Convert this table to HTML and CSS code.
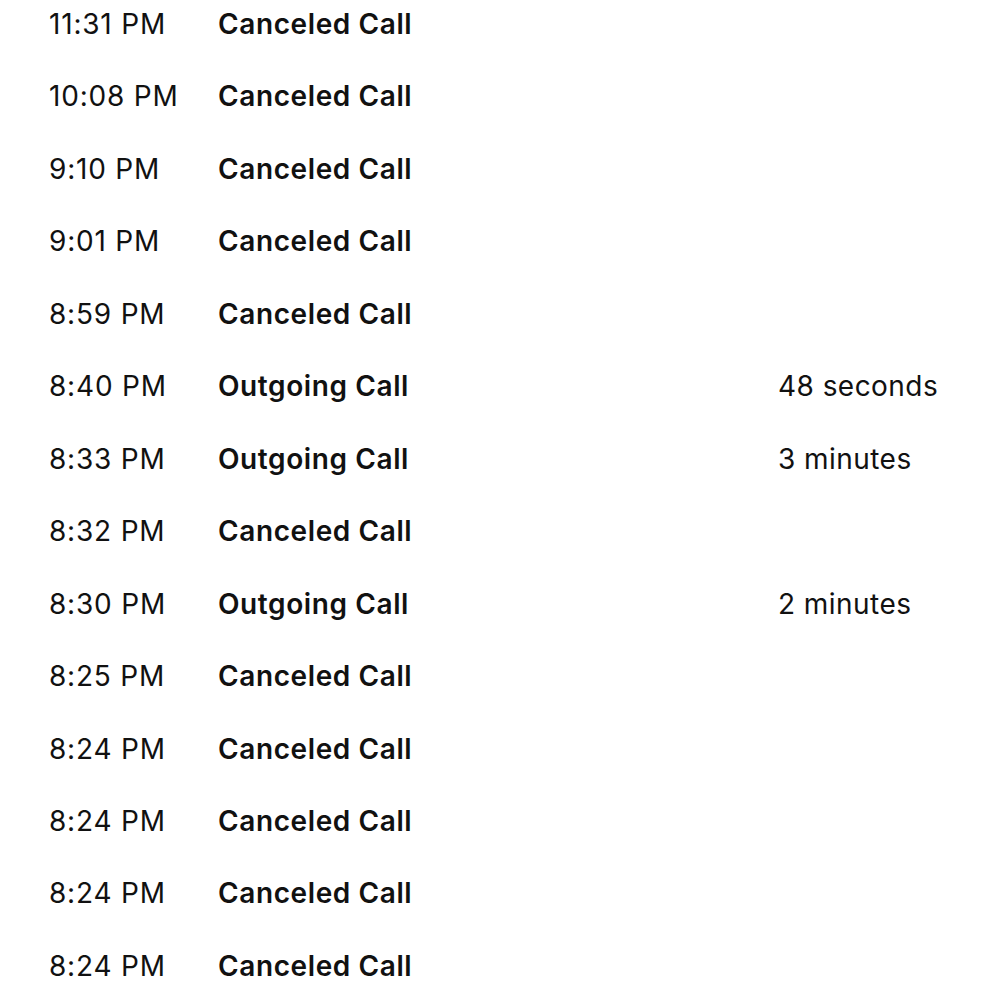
FILE: index.html
```html
<!DOCTYPE html>
<html lang="en">
<head>
    <meta charset="UTF-8">
    <title>Call History</title>
    <link rel="stylesheet" href="styles.css">
</head>

<body>
    <ul class="calls">
        <li class="call"><span class="time">11:31 PM</span><span class="type">Canceled Call</span><span class="duration"></span></li>
        <li class="call"><span class="time">10:08 PM</span><span class="type">Canceled Call</span><span class="duration"></span></li>
        <li class="call"><span class="time">9:10 PM</span><span class="type">Canceled Call</span><span class="duration"></span></li>
        <li class="call"><span class="time">9:01 PM</span><span class="type">Canceled Call</span><span class="duration"></span></li>
        <li class="call"><span class="time">8:59 PM</span><span class="type">Canceled Call</span><span class="duration"></span></li>
        <li class="call"><span class="time">8:40 PM</span><span class="type">Outgoing Call</span><span class="duration">48 seconds</span></li>
        <li class="call"><span class="time">8:33 PM</span><span class="type">Outgoing Call</span><span class="duration">3 minutes</span></li>
        <li class="call"><span class="time">8:32 PM</span><span class="type">Canceled Call</span><span class="duration"></span></li>
        <li class="call"><span class="time">8:30 PM</span><span class="type">Outgoing Call</span><span class="duration">2 minutes</span></li>
        <li class="call"><span class="time">8:25 PM</span><span class="type">Canceled Call</span><span class="duration"></span></li>
        <li class="call"><span class="time">8:24 PM</span><span class="type">Canceled Call</span><span class="duration"></span></li>
        <li class="call"><span class="time">8:24 PM</span><span class="type">Canceled Call</span><span class="duration"></span></li>
        <li class="call"><span class="time">8:24 PM</span><span class="type">Canceled Call</span><span class="duration"></span></li>
        <li class="call"><span class="time">8:24 PM</span><span class="type">Canceled Call</span><span class="duration"></span></li>
    </ul>
</body>
</html>
```

FILE: styles.css
```css
body {
    margin: 0;
    background: #ffffff;
    font-family: 'Inter', 'Roboto', sans-serif;
    color: #111111;
}

.calls {
    list-style: none;
    margin: 0;
    padding: 7px 0 0 49px;
    display: flex;
    flex-direction: column;
    gap: 38.46px;
}

.call {
    display: grid;
    grid-template-columns: 169px 560px auto;
    height: 34px;
    line-height: 34px;
    font-size: 28px;
    letter-spacing: 0.6px;
}

.time {
    font-weight: 400;
    letter-spacing: 0.8px;
}

.type {
    font-weight: 600;
}

.duration {
    font-weight: 400;
    letter-spacing: 0.45px;
}
```
